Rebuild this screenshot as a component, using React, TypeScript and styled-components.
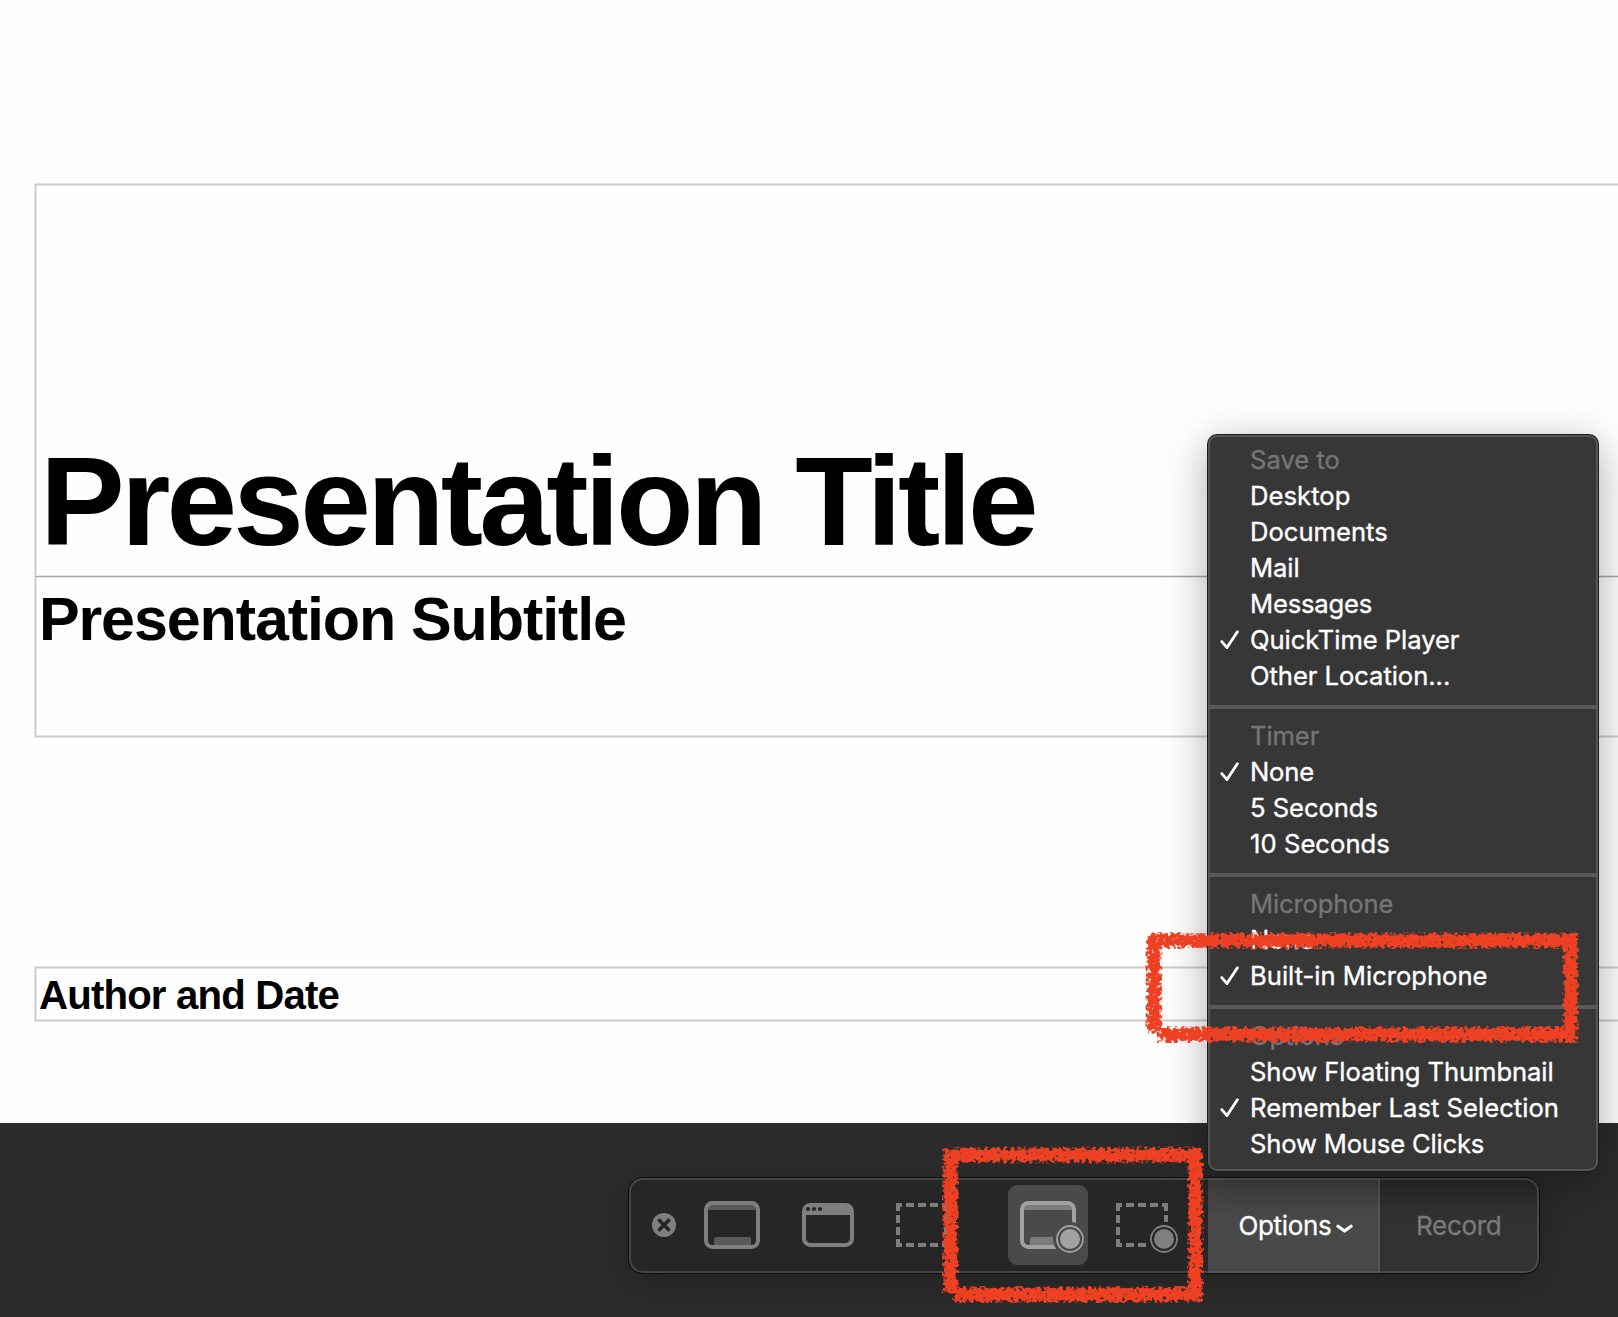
import React from "react";
import styled, { createGlobalStyle, css } from "styled-components";

const GlobalStyle = createGlobalStyle`
  * { box-sizing: border-box; }
  html, body { margin: 0; padding: 0; background: #2b2b2b; overflow: hidden; }
`;

const Screen = styled.main`
  position: relative;
  display: flex;
  flex-direction: column;
  width: 1618px;
  height: 1317px;
  overflow: hidden;
  background: #2b2b2b;
  font-family: Inter, "Liberation Sans", sans-serif;
`;

const Slide = styled.section`
  display: flex;
  flex-direction: column;
  height: 1123px;
  padding: 184px 0 0 35px;
  background: #fefefe;
  color: #000;
  font-family: "Liberation Sans", Arial, sans-serif;
  font-weight: 700;
`;

const Placeholder = styled.div<{ $height: number; $gap?: number; $anchor?: "bottom"; $shared?: boolean }>`
  display: flex;
  flex-direction: column;
  justify-content: ${(p) => (p.$anchor === "bottom" ? "flex-end" : "flex-start")};
  height: ${(p) => p.$height}px;
  margin-top: ${(p) => p.$gap ?? 0}px;
  margin-right: -4px;
  border: 1px solid #c9c9c9;
  border-right: 0;
  ${(p) => p.$shared && css`border-top-color: #a6a6a6;`}
  box-shadow: 0 0 0 1px #e6e6e6, inset 0 0 0 1px #e6e6e6;
`;

const Line = styled.div<{ $size: number; $tracking: number; $lead: number; $indent: number }>`
  font-size: ${(p) => p.$size}px;
  line-height: ${(p) => p.$lead}px;
  letter-spacing: ${(p) => p.$tracking}px;
  padding-left: ${(p) => p.$indent}px;
  white-space: nowrap;
`;

const Desk = styled.section`
  display: flex;
  height: 194px;
  padding: 55px 0 0 629px;
`;

const Toolbar = styled.div`
  display: flex;
  width: 910px;
  height: 95px;
  border-radius: 14px;
  background: #262626;
  box-shadow: 0 0 0 1px #0e0e0e, 0 8px 30px rgba(0, 0, 0, 0.22);
`;

const Tools = styled.div`
  display: flex;
  align-items: center;
  width: 579px;
  padding: 0 0 2px 21px;
  border: 2px solid #454545;
  border-right: 0;
  border-radius: 14px 0 0 14px;
`;

const Tool = styled.button<{ $width: number; $gap?: number; $active?: boolean }>`
  display: flex;
  align-items: center;
  justify-content: center;
  flex: none;
  width: ${(p) => p.$width}px;
  height: 80px;
  margin: 0 0 0 ${(p) => p.$gap ?? 0}px;
  padding: 0;
  border: 0;
  border-radius: 9px;
  background: ${(p) => (p.$active ? "#4a4a4a" : "transparent")};
  color: ${(p) => (p.$active ? "#a1a1a1" : "#7f7f7f")};
  svg { display: block; overflow: visible; }
`;

const Rule = styled.div`
  width: 1px;
  height: 72px;
  margin-left: 37px;
  background: #222;
`;

const OptionsSlot = styled.div`
  position: relative;
  display: flex;
  width: 172px;
`;

const Segment = styled.button<{ $tone: "open" | "disabled" }>`
  display: flex;
  align-items: center;
  flex: 1;
  margin: 0;
  padding: 1px 0 0;
  border: 0 solid #555;
  border-width: 2px 0;
  font: 400 26px/36px Inter, sans-serif;
  -webkit-text-stroke: 0.3px currentColor;
  ${(p) =>
    p.$tone === "open"
      ? css`
          padding-left: 30.5px;
          gap: 5px;
          border-right-width: 2px;
          background: linear-gradient(#404040, #494949 38%);
          color: #fff;
          letter-spacing: -0.35px;
        `
      : css`
          padding-left: 36px;
          border-color: #4b4b4b;
          border-right-width: 2px;
          border-radius: 0 14px 14px 0;
          background: linear-gradient(#2b2b2b, #323232 38%);
          color: #7b7b7b;
          letter-spacing: -0.3px;
        `}
`;

const Menu = styled.div`
  position: absolute;
  left: 0;
  bottom: 102px;
  width: 390px;
  height: 736px;
  padding: 5px 0 0;
  border: 2px solid #555;
  border-radius: 9px;
  background: #373737;
  box-shadow: 0 0 0 1px #1b1b1b, 0 10px 44px rgba(0, 0, 0, 0.34);
  color: #fff;
`;

const Group = styled.div`
  display: flex;
  flex-direction: column;
  & + & {
    margin: 11px -2px 0;
    padding: 9px 2px 0;
    border-top: 4px solid #595959;
  }
`;

const Item = styled.div<{ $heading?: boolean }>`
  display: grid;
  grid-template-columns: 30px 1fr;
  align-items: center;
  height: 36px;
  padding-left: 10px;
  font-size: 25.6px;
  line-height: 36px;
  white-space: nowrap;
  -webkit-text-stroke: 0.35px currentColor;
  color: ${(p) => (p.$heading ? "#757575" : "#fff")};
`;

const Label = styled.span<{ $tracking: number }>`
  grid-column: 2;
  letter-spacing: ${(p) => p.$tracking}px;
`;

const Crayon = styled.svg`
  position: absolute;
  inset: 0;
  pointer-events: none;
`;

const CloseIcon = () => (
  <svg width="24" height="24" viewBox="0 0 24 24">
    <circle cx="12" cy="12" r="12" fill="currentColor" />
    <path d="M7.5 7.5l9 9M16.5 7.5l-9 9" stroke="#262626" strokeWidth="3.6" strokeLinecap="round" />
  </svg>
);

const RecordDot = ({ cx, cy }: { cx: number; cy: number }) => (
  <>
    <circle cx={cx} cy={cy} r="13" fill="none" stroke="currentColor" strokeWidth="1.8" />
    <circle cx={cx} cy={cy} r="10" fill="currentColor" />
  </>
);

const ScreenIcon = ({ record }: { record?: boolean }) => (
  <svg width="56" height="48" viewBox="0 0 56 48">
    <mask id="screen-cut" maskUnits="userSpaceOnUse" x="0" y="0" width="60" height="56">
      <rect width="60" height="56" fill="#fff" />
      <circle cx="50" cy="38" r="17" fill="#000" />
    </mask>
    <g mask={record ? "url(#screen-cut)" : undefined}>
      <path d="M3 9V7a4 4 0 0 1 4-4h42a4 4 0 0 1 4 4v2z" fill={record ? "#7c7c7c" : "#595959"} />
      <path d="M10 45v-7q0-2 2-2h33q2 0 2 2v7z" fill={record ? "#7c7c7c" : "#595959"} />
      <rect x="2" y="2" width="52" height="44" rx="6.5" fill="none" stroke="currentColor" strokeWidth="4" />
    </g>
    {record && <RecordDot cx={50} cy={38} />}
  </svg>
);

const WindowIcon = () => (
  <svg width="52" height="44" viewBox="0 0 52 44">
    <rect x="2" y="2" width="48" height="40" rx="6.5" fill="none" stroke="currentColor" strokeWidth="4" />
    <path d="M2 12V8a6 6 0 0 1 6-6h36a6 6 0 0 1 6 6v4z" fill="currentColor" />
    {[6, 12, 18].map((x) => (
      <circle key={x} cx={x} cy="6" r="2.1" fill="#262626" />
    ))}
  </svg>
);

const SelectionIcon = ({ record }: { record?: boolean }) => (
  <svg width="52" height="44" viewBox="0 0 52 44" shapeRendering={record ? undefined : "crispEdges"}>
    <mask id="selection-cut" maskUnits="userSpaceOnUse" x="0" y="0" width="60" height="56">
      <rect width="60" height="56" fill="#fff" />
      <circle cx="48" cy="36" r="17.5" fill="#000" />
    </mask>
    <path
      mask={record ? "url(#selection-cut)" : undefined}
      fill="none"
      stroke="currentColor"
      strokeWidth="4"
      d="M0 2H6M10 2h8M22 2h8M34 2h8M46 2h6M0 42H6M10 42h8M22 42h8M34 42h8M46 42h6M2 0v8M2 12v8M2 24v8M2 36v8M50 0v8M50 12v8M50 24v8M50 36v8"
    />
    {record && <RecordDot cx={48} cy={36} />}
  </svg>
);

const Check = () => (
  <svg width="20" height="20" viewBox="0 0 20 20">
    <path d="M1.8 11.6L7 17.6L17.4 1.8" fill="none" stroke="#fff" strokeWidth="2.8" strokeLinecap="round" strokeLinejoin="round" />
  </svg>
);

const ChevronGlyph = styled.svg`
  display: block;
  margin-top: 6px;
`;

const Chevron = () => (
  <ChevronGlyph width="17" height="10" viewBox="0 0 17 10">
    <path d="M2 2.3L8.5 7L15 2.3" fill="none" stroke="#fff" strokeWidth="3.2" strokeLinecap="round" strokeLinejoin="round" />
  </ChevronGlyph>
);

type Entry = { text: string; tracking: number; heading?: boolean; checked?: boolean };

const groups: Entry[][] = [
  [
    { text: "Save to", tracking: 0, heading: true },
    { text: "Desktop", tracking: 0.05 },
    { text: "Documents", tracking: 0 },
    { text: "Mail", tracking: -0.1 },
    { text: "Messages", tracking: -0.18 },
    { text: "QuickTime Player", tracking: -0.06, checked: true },
    { text: "Other Location...", tracking: -0.05 },
  ],
  [
    { text: "Timer", tracking: -0.1, heading: true },
    { text: "None", tracking: -0.2, checked: true },
    { text: "5 Seconds", tracking: -0.05 },
    { text: "10 Seconds", tracking: 0.05 },
  ],
  [
    { text: "Microphone", tracking: -0.15, heading: true },
    { text: "None", tracking: -0.2 },
    { text: "Built-in Microphone", tracking: 0, checked: true },
  ],
  [
    { text: "Options", tracking: -0.1, heading: true },
    { text: "Show Floating Thumbnail", tracking: -0.07 },
    { text: "Remember Last Selection", tracking: 0.03, checked: true },
    { text: "Show Mouse Clicks", tracking: -0.17 },
  ],
];

const OptionsMenu = () => (
  <Menu>
    {groups.map((group, i) => (
      <Group key={i}>
        {group.map((entry) => (
          <Item key={entry.text} $heading={entry.heading}>
            {entry.checked && <Check />}
            <Label $tracking={entry.tracking}>{entry.text}</Label>
          </Item>
        ))}
      </Group>
    ))}
  </Menu>
);

const Highlights = () => (
  <Crayon width="1618" height="1317" viewBox="0 0 1618 1317">
    <filter id="crayon" filterUnits="userSpaceOnUse" x="930" y="920" width="670" height="397" colorInterpolationFilters="sRGB">
      <feMorphology in="SourceAlpha" operator="dilate" radius="2" result="reach" />
      <feGaussianBlur in="SourceAlpha" stdDeviation="1.9" result="soft" />
      <feTurbulence type="fractalNoise" baseFrequency="0.27" numOctaves="2" seed="8" result="noise" />
      <feColorMatrix in="noise" type="matrix" values="0 0 0 0 0  0 0 0 0 0  0 0 0 0 0  1 0 0 0 0" result="grain" />
      <feComposite in="soft" in2="grain" operator="arithmetic" k1="0" k2="0.46" k3="1" k4="-0.25" result="mix" />
      <feComponentTransfer in="mix" result="edge">
        <feFuncA type="linear" slope="6" intercept="-2.2" />
      </feComponentTransfer>
      <feComposite in="edge" in2="reach" operator="in" result="marks" />
      <feFlood floodColor="#ee4023" />
      <feComposite in2="marks" operator="in" />
    </filter>
    <g filter="url(#crayon)" fill="none" stroke="#ee4023" strokeWidth="13">
      <path d="M1148 940.5H1577M1154 935V1032M1570.5 934V1041M1159 1034.5H1577" />
      <path d="M953 1155H1202M950.5 1149V1293M1195.5 1150V1301M954 1294.5H1202" />
    </g>
  </Crayon>
);

export default function App() {
  return (
    <Screen>
      <GlobalStyle />
      <Slide>
        <Placeholder $height={393} $anchor="bottom">
          <Line $size={127} $tracking={-3.8} $lead={150} $indent={4}>Presentation Title</Line>
        </Placeholder>
        <Placeholder $height={161} $gap={-1} $shared>
          <Line $size={61} $tracking={-1.1} $lead={84} $indent={2.9}>Presentation Subtitle</Line>
        </Placeholder>
        <Placeholder $height={54} $gap={230}>
          <Line $size={40.2} $tracking={-0.84} $lead={55} $indent={3}>Author and Date</Line>
        </Placeholder>
      </Slide>
      <Desk>
        <Toolbar>
          <Tools>
            <Tool $width={24} aria-label="Close"><CloseIcon /></Tool>
            <Tool $width={56} $gap={28}><ScreenIcon /></Tool>
            <Tool $width={52} $gap={42}><WindowIcon /></Tool>
            <Tool $width={52} $gap={42}><SelectionIcon /></Tool>
            <Rule />
            <Tool $width={80} $gap={22} $active><ScreenIcon record /></Tool>
            <Tool $width={52} $gap={28}><SelectionIcon record /></Tool>
          </Tools>
          <OptionsSlot>
            <Segment $tone="open">Options<Chevron /></Segment>
            <OptionsMenu />
          </OptionsSlot>
          <Segment $tone="disabled">Record</Segment>
        </Toolbar>
      </Desk>
      <Highlights />
    </Screen>
  );
}
